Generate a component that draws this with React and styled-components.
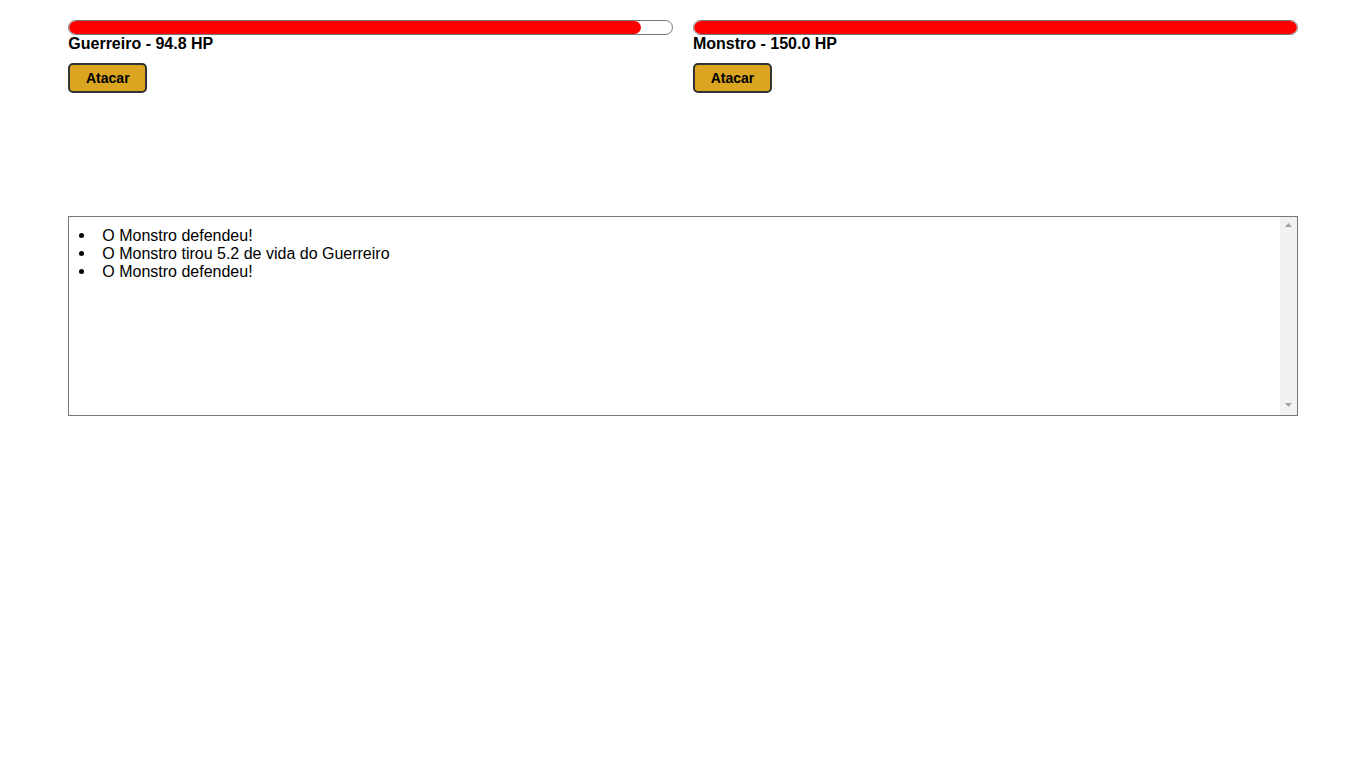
import React from 'react';
import styled, { createGlobalStyle } from 'styled-components';

const GlobalStyle = createGlobalStyle`
  body {
    margin: 0;
    font-family: "Liberation Sans", Arial, sans-serif;
    font-size: 16px;
    color: #000;
    background: #fff;
  }
`;

const Page = styled.div`
  width: 90%;
  margin: 0 auto;
  padding-top: 20px;
`;

const Fighters = styled.div`
  display: grid;
  grid-template-columns: 1fr 1fr;
  column-gap: 20px;
  height: 196px;
`;

const Fighter = styled.div`
  display: flex;
  flex-direction: column;
  align-items: flex-start;
`;

const LifeBar = styled.div`
  width: 100%;
  height: 15px;
  box-sizing: border-box;
  border: 1px solid #777;
  border-radius: 8px;
  overflow: hidden;
`;

const LifeFill = styled.div`
  height: 100%;
  background: #ff0000;
  border-radius: 8px;
`;

const Name = styled.div`
  font-weight: bold;
  font-size: 16px;
  line-height: 18px;
`;

const AttackButton = styled.button`
  margin-top: 10px;
  width: 79px;
  height: 30px;
  background: #daa520;
  border: 2px solid #333;
  border-radius: 5px;
  font-family: "Liberation Sans", Arial, sans-serif;
  font-weight: bold;
  font-size: 14px;
  color: #000;
  cursor: pointer;
`;

const Log = styled.div`
  display: flex;
  height: 200px;
  box-sizing: border-box;
  border: 1px solid #777;
`;

const LogList = styled.ul`
  flex: 1;
  margin: 0;
  padding: 10px 0 0 10px;
  list-style: none;
  overflow: hidden;
`;

const LogItem = styled.li`
  line-height: 18px;

  &::before {
    content: "";
    display: inline-block;
    width: 5px;
    height: 5px;
    border-radius: 50%;
    background: #000;
    margin-right: 18px;
    vertical-align: 3px;
  }
`;

const ScrollRail = styled.div`
  width: 17px;
  flex: none;
  background: #f1f1f1;
  display: flex;
  flex-direction: column;
  justify-content: space-between;
  align-items: center;
  padding: 6px 0 8px;
  box-sizing: border-box;
`;

const Arrow = ({ down }) => (
  <svg width="7" height="4" viewBox="0 0 7 4">
    <path d={down ? 'M0 0H7L3.5 4Z' : 'M0 4H7L3.5 0Z'} fill="#a3a3a3" />
  </svg>
);

const fighters = [
  { name: 'Guerreiro', life: 94.8, max: 100 },
  { name: 'Monstro', life: 150, max: 150 },
];

const log = [
  'O Monstro defendeu!',
  'O Monstro tirou 5.2 de vida do Guerreiro',
  'O Monstro defendeu!',
];

export default function App() {
  return (
    <>
      <GlobalStyle />
      <Page>
        <Fighters>
          {fighters.map((f) => (
            <Fighter key={f.name}>
              <LifeBar>
                <LifeFill style={{ width: `${(f.life / f.max) * 100}%` }} />
              </LifeBar>
              <Name>{f.name} - {f.life.toFixed(1)} HP</Name>
              <AttackButton type="button">Atacar</AttackButton>
            </Fighter>
          ))}
        </Fighters>
        <Log>
          <LogList>
            {log.map((entry, i) => (
              <LogItem key={i}>{entry}</LogItem>
            ))}
          </LogList>
          <ScrollRail>
            <Arrow />
            <Arrow down />
          </ScrollRail>
        </Log>
      </Page>
    </>
  );
}
